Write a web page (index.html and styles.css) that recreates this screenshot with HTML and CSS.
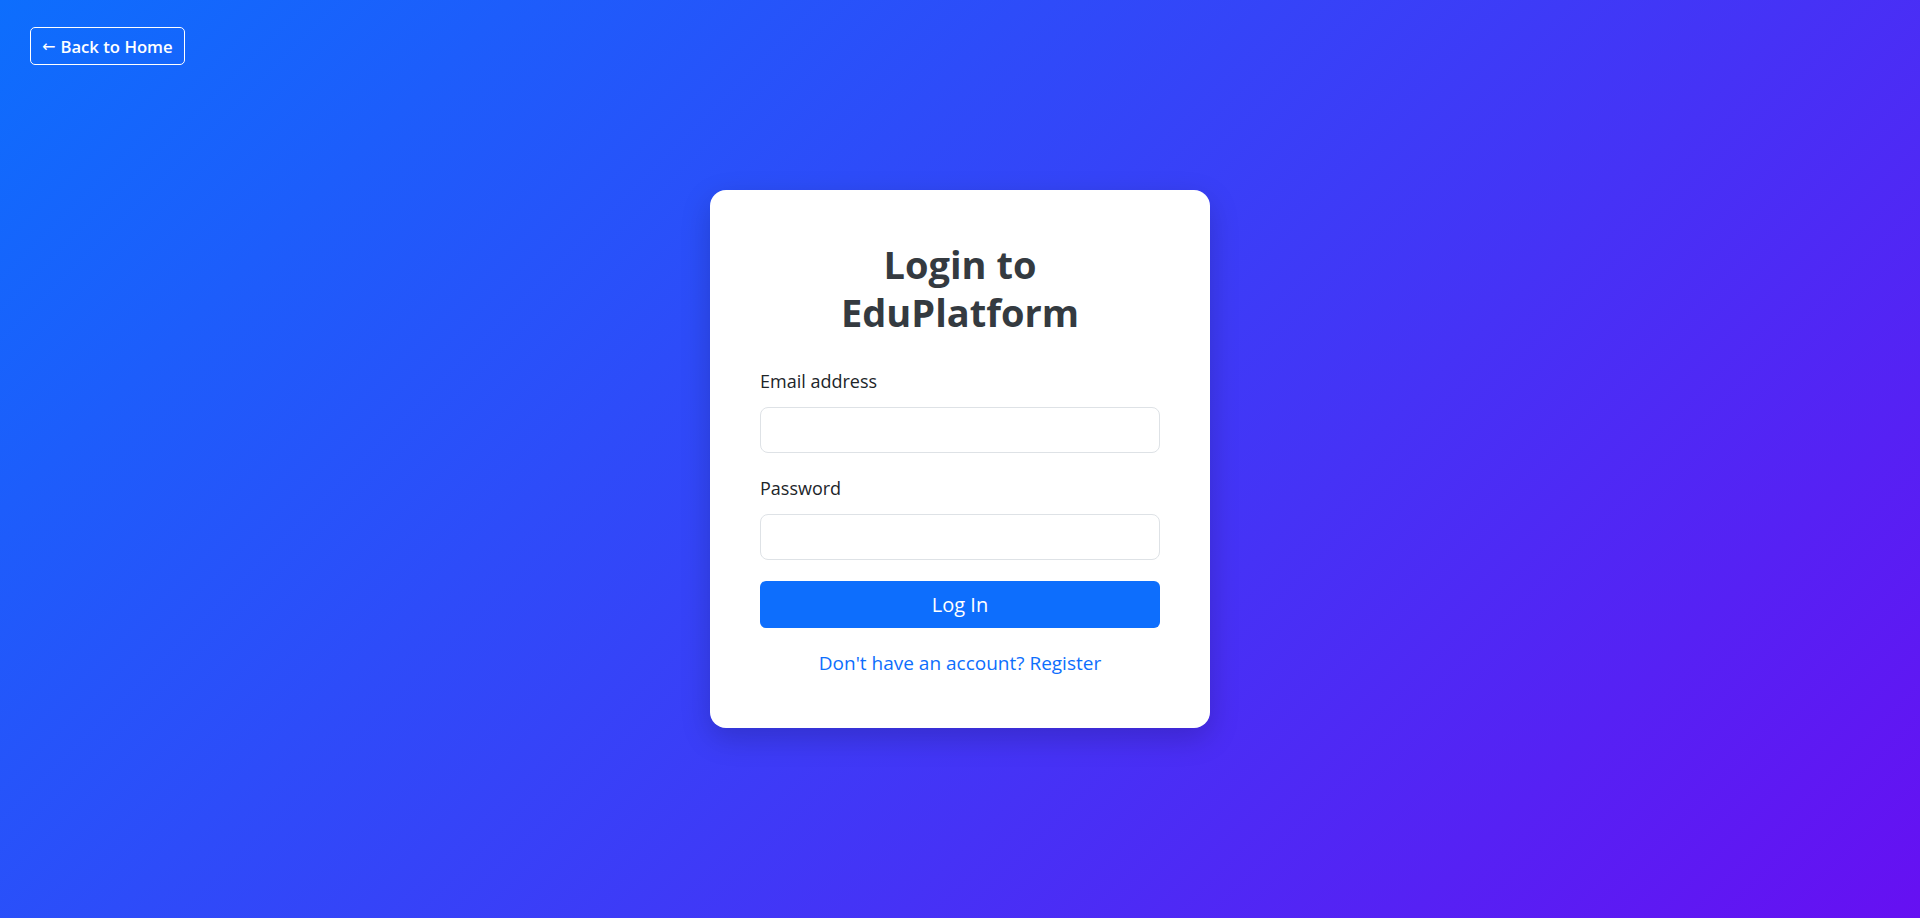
FILE: index.html
```html
<!DOCTYPE html>
<html lang="en">
<head>
<meta charset="utf-8">
<title>Login to EduPlatform</title>
<link rel="stylesheet" href="styles.css">
</head>
<body>
<main class="page">
  <a class="back-link" href="#"><span class="arrow">←</span> Back to Home</a>
  <section class="card">
    <h1 class="title">Login to<br>EduPlatform</h1>
    <form class="form">
      <div class="field">
        <label class="label" for="email">Email address</label>
        <input class="input" id="email" type="email">
      </div>
      <div class="field">
        <label class="label" for="password">Password</label>
        <input class="input" id="password" type="password">
      </div>
      <button class="submit" type="button">Log In</button>
    </form>
    <p class="register"><a href="#">Don't have an account? Register</a></p>
  </section>
</main>
</body>
</html>
```

FILE: styles.css
```css
* { box-sizing: border-box; }
html, body { margin: 0; padding: 0; height: 100%; }
body {
  font-family: "Open Sans", "Noto Sans", sans-serif;
  color: #212529;
}
.page {
  position: relative;
  min-height: 918px;
  height: 100%;
  display: flex;
  align-items: center;
  justify-content: center;
  background: linear-gradient(135deg, #0d6efd 0%, #6610f2 100%);
}
.back-link {
  position: absolute;
  top: 27px;
  left: 30px;
  height: 38px;
  padding: 0 11px;
  display: flex;
  align-items: center;
  gap: 5px;
  border: 1px solid #fff;
  border-radius: 5px;
  color: #fff;
  text-decoration: none;
  font-size: 16.7px;
  font-weight: 600;
}
.arrow {
  font-family: "DejaVu Sans", sans-serif;
  font-weight: 400;
  font-size: 16px;
}
.card {
  width: 500px;
  background: #fff;
  border-radius: 16px;
  padding: 50px 50px 50px;
  box-shadow: 0 10px 30px rgba(0, 0, 0, 0.18);
}
.title {
  margin: 0 0 32px;
  text-align: center;
  font-size: 38px;
  line-height: 48px;
  font-weight: 700;
  color: #343a40;
}
.form { display: flex; flex-direction: column; }
.field { display: flex; flex-direction: column; }
.field + .field { margin-top: 22px; }
.label {
  font-size: 18px;
  line-height: 27px;
  margin-bottom: 12px;
  color: #212529;
}
.input {
  height: 46px;
  border: 1px solid #dee2e6;
  border-radius: 8px;
  font: inherit;
  padding: 0 14px;
  background: #fff;
}
.submit {
  margin-top: 21px;
  height: 47px;
  border: 0;
  border-radius: 6px;
  background: #0d6efd;
  color: #fff;
  font-family: inherit;
  font-size: 20px;
}
.register {
  margin: 20px 0 0;
  text-align: center;
  font-size: 19px;
  line-height: 30px;
}
.register a {
  color: #0d6efd;
  text-decoration: none;
}
```
